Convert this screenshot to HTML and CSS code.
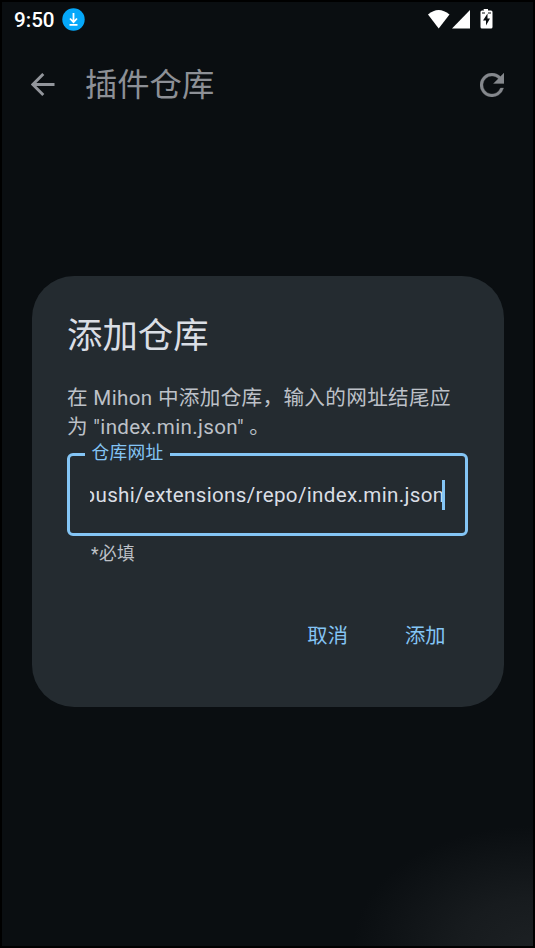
FILE: index.html
```html
<!DOCTYPE html>
<html lang="zh-CN">
<head>
<meta charset="utf-8">
<title>插件仓库</title>
<link rel="stylesheet" href="styles.css">
</head>
<body>
<div class="screen">
  <header class="status">
    <span class="time">9:50</span>
    <svg class="download" viewBox="0 0 23 23"><circle cx="11.5" cy="11.5" r="11.2" fill="#05a8fa"/><path d="M11.5 5v9M8 10.5l3.5 3.7 3.5-3.7M7.5 16.8h8" fill="none" stroke="#fff" stroke-width="1.8"/></svg>
    <svg class="indicators" viewBox="0 0 68 22"><path d="M1 5.500Q11.500-3.500 22.500 5.500L11.700 19.500Z" fill="#fff"/><path d="M25 19.500H43V1Z" fill="#fff"/><path d="M56.500 0h4.500v1.500h3q1.500 0 1.500 1.500v15q0 1.500-1.500 1.500h-9q-1.500 0-1.500-1.500V3q0-1.500 1.500-1.500h2Z" fill="#fff"/><path d="M60.500 4.500l-4.500 7h3v5l4-7h-2.500ZM55 3.600h3v1h-3ZM61 3.600h3v1h-3Z" fill="#0a0e11"/></svg>
  </header>
  <nav class="appbar">
    <svg class="back" viewBox="0 0 24 24"><path d="M23.500 11.500H2M12.300 1L1.800 11.500l10.500 10.500" fill="none" stroke="#92959b" stroke-width="2.900"/></svg>
    <h1>插件仓库</h1>
    <svg class="refresh" viewBox="4 4 16 16"><path d="M17.65 6.35A7.96 7.96 0 0 0 12 4a8 8 0 1 0 7.730 10h-2.080A6 6 0 1 1 12 6c1.660 0 3.140.69 4.220 1.780L13 11h7V4z" fill="#85888d" stroke="#85888d" stroke-width=".2"/></svg>
  </nav>
  <main class="dialog">
    <h2>添加仓库</h2>
    <p class="message">在 Mihon 中添加仓库，输入的网址结尾应<br>为 "index.min.json" 。</p>
    <fieldset class="field">
      <legend>仓库网址</legend>
      <div class="input"><span>pushi/extensions/repo/index.min.json</span></div>
    </fieldset>
    <p class="hint">*必填</p>
    <div class="actions"><span>取消</span><span>添加</span></div>
  </main>
</div>
</body>
</html>
```
FILE: styles.css
```css
* { box-sizing: border-box; margin: 0; padding: 0; }
body {
  background: #000;
  font-family: Roboto, "Noto Sans CJK SC", sans-serif;
  color: #dadee5;
}
svg { display: block; flex: none; }
.screen {
  width: 535px;
  height: 948px;
  overflow: hidden;
  border: 2px solid #000;
  background: radial-gradient(ellipse 180px 120px at 100% 100%, #1c2023 0%, #171b1e 40%, #0a0e11 100%) #0a0e11;
}
.status { display: flex; align-items: center; height: 35px; padding-left: 12px; }
.time { width: 48px; padding-top: 2px; font-size: 20.600px; font-weight: 500; line-height: 35px; color: #fff; }
.download { width: 23px; height: 23px; }
.indicators { width: 68px; height: 22px; margin-left: 341.500px; }
.appbar { display: flex; align-items: center; height: 95px; padding: 0 29px 0 29px; }
.back { width: 24px; height: 24px; }
.appbar h1 { margin-left: 30px; font-size: 32.3px; font-weight: 400; line-height: 48px; color: #8d9096; }
.refresh { width: 24px; height: 24px; margin-left: auto; }
.dialog {
  width: 472px;
  height: 431px;
  margin: 144px 0 0 29.500px;
  padding: 36.500px 35.500px;
  border-radius: 42px;
  background: #242b30;
}
.dialog h2 { font-size: 35.400px; font-weight: 400; line-height: 47px; }
.message { margin-top: 24px; font-size: 20.600px; line-height: 29.500px; letter-spacing: .33px; color: #bdc1c8; white-space: nowrap; }
.field {
  width: 401px;
  height: 95px;
  margin-top: -1.500px;
  padding: 0 20px;
  border: 3px solid #84c5f5;
  border-radius: 6px;
}
.field legend {
  height: 26px;
  margin-left: -5.500px;
  padding: 0 7px;
  font-size: 17.700px;
  line-height: 25px;
  letter-spacing: .3px;
  color: #84c5f5;
}
.input {
  display: flex;
  justify-content: flex-end;
  width: 355px;
  height: 30px;
  margin-top: 13px;
  overflow: hidden;
  border-right: 3px solid #84c5f5;
  font-size: 20.600px;
  line-height: 30px;
  letter-spacing: .33px;
  white-space: nowrap;
}
.input span { margin-right: -2.500px; }
.hint { margin: 5px 0 0 24px; font-size: 17.700px; line-height: 26px; letter-spacing: .4px; color: #bdc1c8; }
.actions { display: flex; justify-content: flex-end; gap: 57px; margin: 54px 22.500px 0 0; font-size: 20.300px; line-height: 30px; color: #84c5f5; }
```
